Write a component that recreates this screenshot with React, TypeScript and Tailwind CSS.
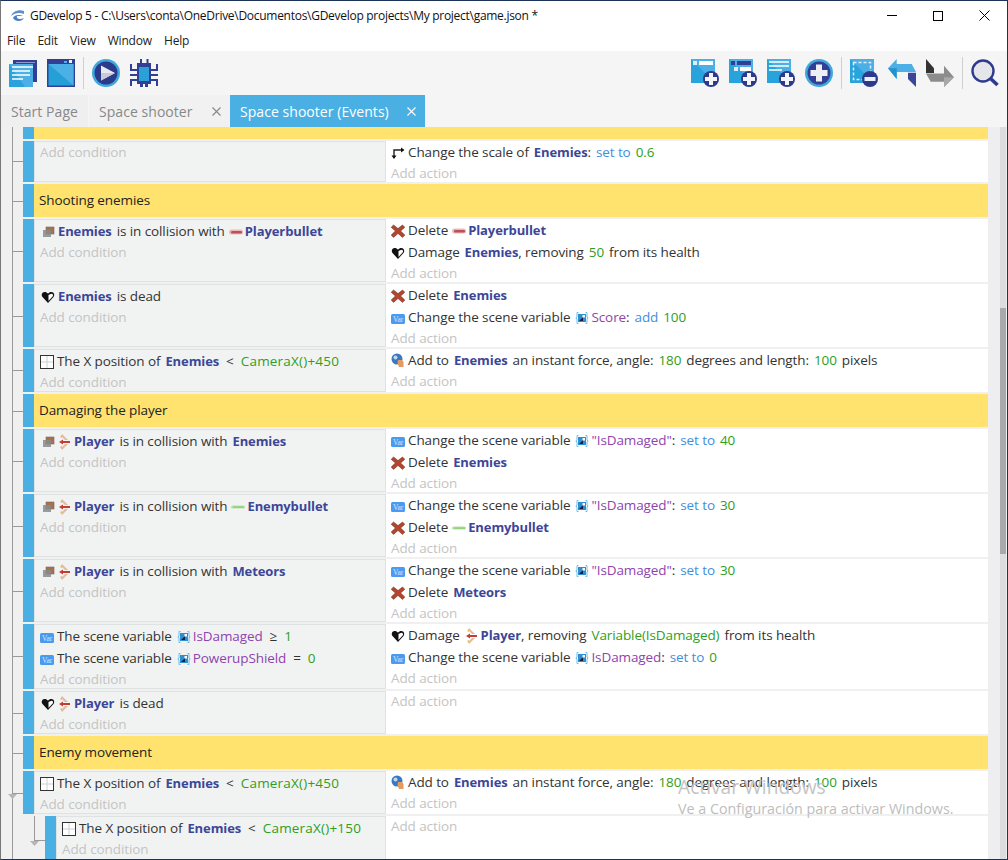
import type { ReactNode } from "react"

const font = "font-['Open_Sans','Noto_Sans',sans-serif]"

// --- inline text helpers ---
const Obj = ({ children }: { children: ReactNode }) => <span className="text-[13px] font-bold text-[#3c4698]">{children}</span>
const Op = ({ children }: { children: ReactNode }) => <span className="text-[#3f8ee0]">{children}</span>
const Num = ({ children }: { children: ReactNode }) => <span className="text-[#2f9e1c]">{children}</span>
const Expr = ({ children }: { children: ReactNode }) => <span className="tracking-[0.2px] text-[#2f9e1c]">{children}</span>
const Vr = ({ children }: { children: ReactNode }) => <span className="text-[#8e44ad]">{children}</span>
const G = () => <span className="inline-block w-[5px]" />
const GG = () => <span className="inline-block w-[7px]" />

const ic = "mr-[3px] inline-block align-[-3px]"

// --- small instruction icons ---
function CollisionIcon() {
  return (
    <svg width="14" height="14" viewBox="0 0 14 14" className={`${ic} ml-[1px]`}>
      <rect x="5" y="2" width="8" height="7" fill="#a5714f" stroke="#7d6a5e" strokeWidth="0.6" />
      <rect x="2" y="5" width="8" height="7" fill="#8a8a8a" opacity="0.85" />
    </svg>
  )
}

function HeartIcon() {
  return (
    <svg width="14" height="14" viewBox="0 0 14 14" className={ic}>
      <path d="M7 13 L1.5 7 C0 5 1 2 3.6 2 C5 2 6.2 2.6 7 3.8 C7.8 2.6 9 2 10.4 2 C13 2 14 5 12.5 7 Z" fill="#111" />
      <path d="M7.5 5 L10.3 3.8 C12 3.8 12.6 5.4 11.6 6.6 L7.5 11 Z" fill="#fff" />
    </svg>
  )
}

function DeleteIcon() {
  return (
    <svg width="14" height="14" viewBox="0 0 14 14" className={ic}>
      <path d="M2.5 1 L7 4.6 L11.5 1 L13.8 3.3 L9.6 7 L13.8 11 L11.5 13.4 L7 9.4 L2.5 13.4 L0.2 11 L4.4 7 L0.2 3.3 Z" fill="#b5452c" stroke="#6e3a2c" strokeWidth="0.6" />
    </svg>
  )
}

function VarIcon() {
  return (
    <svg width="14" height="12" viewBox="0 0 14 12" className={`${ic} align-[-2px]`}>
      <rect x="0" y="1" width="14" height="10" rx="1.5" fill="#4a9af0" />
      <text x="7" y="8.6" textAnchor="middle" fontSize="7.5" fill="#d6e8fb" fontFamily="'Liberation Serif', serif">Var</text>
    </svg>
  )
}

function ScopeIcon() {
  return (
    <svg width="14" height="14" viewBox="0 0 14 14" className="mr-[2px] inline-block align-[-3px]">
      <path d="M3.5 1.5 H2 V6 L0.8 7 L2 8 V12.5 H3.5 M10.5 1.5 H12 V6 L13.2 7 L12 8 V12.5 H10.5" fill="none" stroke="#6dbcec" strokeWidth="1" />
      <rect x="3" y="3" width="8" height="8" fill="#2d8fd0" />
      <path d="M4 10 L8 6 V10 Z" fill="#14233f" />
      <rect x="7.5" y="4" width="2.5" height="2.5" fill="#fff" />
    </svg>
  )
}

function PositionIcon() {
  return (
    <svg width="14" height="14" viewBox="0 0 14 14" className={ic}>
      <rect x="0.5" y="0.5" width="13" height="13" fill="#fff" stroke="#333" />
      <path d="M7 1 V13 M1 7 H13" stroke="#cfcfcf" strokeWidth="1" />
    </svg>
  )
}

function ScaleIcon() {
  return (
    <svg width="14" height="14" viewBox="0 0 14 14" className={ic}>
      <path d="M3 12 V4 H10" fill="none" stroke="#222" strokeWidth="1.4" />
      <path d="M0.5 9.5 H5.5 L3 13 Z M10 1.5 L13.5 4 L10 6.5 Z" fill="#111" />
    </svg>
  )
}

function ForceIcon() {
  return (
    <svg width="14" height="15" viewBox="0 0 14 15" className={ic}>
      <circle cx="6" cy="6" r="5.5" fill="#3a78c0" />
      <circle cx="4.5" cy="4.5" r="2" fill="#bcd9f2" />
      <path d="M7 7 H11 L12.5 9 V14 H8 L6.5 10 Z" fill="#e59a62" />
    </svg>
  )
}

function BulletRed() {
  return (
    <svg width="14" height="6" viewBox="0 0 14 6" className="ml-[4px] mr-[2px] inline-block align-[1px]">
      <rect x="0" y="0.5" width="14" height="5" rx="2.5" fill="#e8b9b9" />
      <rect x="2" y="2" width="11" height="2.4" rx="1.2" fill="#bd4f55" />
    </svg>
  )
}

function BulletGreen() {
  return (
    <svg width="14" height="4" viewBox="0 0 14 4" className="ml-[4px] mr-[2px] inline-block align-[2px]">
      <rect x="0" y="0.5" width="14" height="3" rx="1.5" fill="#b7e3a8" />
      <rect x="2" y="1.5" width="11" height="1.2" fill="#85c96f" />
    </svg>
  )
}

function ShipIcon() {
  return (
    <svg width="11" height="16" viewBox="0 0 11 16" className="ml-[1px] mr-[4px] inline-block align-[-4px]">
      <path d="M3 0 L9 6 L6 6 L2 2 Z" fill="#e3b9a0" />
      <path d="M3 16 L9 10 L6 10 L2 14 Z" fill="#e3b9a0" />
      <path d="M1 3 L3 1 L3 4 Z M1 13 L3 15 L3 12 Z" fill="#e2c24a" />
      <path d="M0 8 L4 5.5 L4 7 L11 7 V9 L4 9 L4 10.5 Z" fill="#c23c34" />
    </svg>
  )
}

// --- toolbar icons ---
function DocsIcon() {
  return (
    <svg width="28" height="28" viewBox="0 0 28 28">
      <rect x="4" y="1" width="24" height="22" fill="#333f94" />
      <path d="M7 3 H26 V4 H7 Z" fill="#8f97cc" />
      <rect x="0" y="5" width="24" height="23" fill="#29a3dc" />
      <path d="M0 5 H24 V28 H16 Z" fill="#4cb0e6" />
      <path d="M3 8 H24 M3 12 H21 M3 16 H21 M3 20 H14" stroke="#fff" strokeWidth="1.6" />
    </svg>
  )
}

function SceneIcon() {
  return (
    <svg width="28" height="28" viewBox="0 0 28 28">
      <rect width="28" height="28" fill="#333f94" />
      <rect x="1.5" y="5" width="25" height="21.5" fill="#25a0d6" />
      <path d="M1.5 5 H26.5 V26.5 Z" fill="#4cb0e6" />
      <rect x="17" y="2" width="3" height="2" fill="#4cb0e6" />
      <rect x="22" y="1" width="3" height="3" fill="#e6f2fb" />
    </svg>
  )
}

function PlayIcon() {
  return (
    <svg width="28" height="28" viewBox="0 0 28 28">
      <circle cx="14" cy="14" r="14" fill="#3fa9dd" />
      <circle cx="14" cy="14" r="11.5" fill="#2c3a8c" />
      <path d="M9 6.5 L23 14 L9 21.5 Z" fill="#e9eaf0" />
      <path d="M9 14 H23 L9 21.5 Z" fill="#c8cad6" />
    </svg>
  )
}

function BugIcon() {
  return (
    <svg width="28" height="28" viewBox="0 0 28 28">
      <path d="M11 0 V5 M17.5 0 V5 M1 5 V11 H7 M27 5 V11 H21 M0 16 H7 M28 16 H21 M1 27 V21 H7 M27 27 V21 H21" fill="none" stroke="#333f94" strokeWidth="2" />
      <rect x="7" y="4" width="14" height="21" fill="#333f94" />
      <rect x="9" y="8" width="10" height="14" fill="#2aa0d8" />
      <rect x="10" y="25" width="3" height="3" fill="#333f94" />
      <rect x="15" y="25" width="3" height="3" fill="#333f94" />
    </svg>
  )
}

function PlusBadge({ minus }: { minus?: boolean }) {
  return (
    <g>
      <circle cx="20" cy="20" r="8" fill="#2c3a8c" />
      {minus ? <rect x="14.5" y="18" width="11" height="4" fill="#eef" /> : <path d="M18 14 H22 V18 H26 V22 H22 V26 H18 V22 H14 V18 H18 Z" fill="#f3f3f8" />}
    </g>
  )
}

function AddSceneIcon({ kind }: { kind: "a" | "b" | "c" }) {
  return (
    <svg width="28" height="28" viewBox="0 0 28 28">
      <rect x="0" y="0" width="24" height="24" fill="#29a3dc" />
      <path d="M0 0 H24 V24 Z" fill="#4cb0e6" />
      {kind === "a" && (
        <>
          <rect x="2" y="2" width="4" height="4" fill="#dfeefa" />
          <rect x="8" y="2" width="14" height="4" fill="#fff" />
        </>
      )}
      {kind === "b" && (
        <>
          <rect x="2" y="2" width="4" height="4" fill="#333f94" />
          <rect x="8" y="2" width="14" height="4" fill="#333f94" />
          <rect x="5" y="8" width="4" height="4" fill="#dfeefa" />
          <rect x="11" y="8" width="11" height="4" fill="#fff" />
        </>
      )}
      {kind === "c" && <path d="M2 3 H22 M2 7 H22 M2 11 H15" stroke="#fff" strokeWidth="1.6" />}
      <PlusBadge />
    </svg>
  )
}

function BigPlusIcon() {
  return (
    <svg width="28" height="28" viewBox="0 0 28 28">
      <circle cx="14" cy="14" r="14" fill="#3fa9dd" />
      <circle cx="14" cy="14" r="11.5" fill="#333f94" />
      <path d="M11 5.5 H17 V11 H22.5 V17 H17 V22.5 H11 V17 H5.5 V11 H11 Z" fill="#eeeef5" />
    </svg>
  )
}

function RemoveIcon() {
  return (
    <svg width="28" height="28" viewBox="0 0 28 28">
      <rect x="0" y="0" width="24" height="24" fill="#29a3dc" />
      <path d="M0 0 H24 V24 Z" fill="#4cb0e6" />
      <rect x="3.5" y="3.5" width="17" height="17" fill="none" stroke="#dfeefa" strokeWidth="1.5" strokeDasharray="3 2" />
      <PlusBadge minus />
    </svg>
  )
}

function UndoIcon() {
  return (
    <svg width="28" height="28" viewBox="0 0 28 28">
      <path d="M8.7 0 V5 H23.7 L28 13 H8.7 V20 L0 9.3 Z" fill="#4cb0e6" />
      <path d="M8.7 9.3 V20 L0 9.3 Z" fill="#2293cb" />
      <path d="M20 13.7 H28 V28 L20 20 Z" fill="#3c4698" />
    </svg>
  )
}

function RedoIcon() {
  return (
    <svg width="28" height="28" viewBox="0 0 28 28">
      <path d="M0 0 L8 9.3 V14 H0 Z" fill="#333" />
      <path d="M0 14.5 H18 V6.7 L28 18.3 L18 28 V22.7 H4.7 Z" fill="#8c8c8c" />
      <path d="M18 18.3 H28 L18 28 Z" fill="#a8a8a8" />
    </svg>
  )
}

function SearchIcon() {
  return (
    <svg width="28" height="28" viewBox="0 0 28 28">
      <circle cx="12" cy="12" r="10.5" fill="#e4e6ea" stroke="#2f3a8f" strokeWidth="2.4" />
      <path d="M19.5 19.5 L26.5 26" stroke="#2f3a8f" strokeWidth="3.6" />
    </svg>
  )
}

function ToolbarSep() {
  return <div className="mx-[8px] h-[32px] w-px bg-[#cfcfcf]" />
}

function TabClose({ color }: { color: string }) {
  return (
    <svg width="9" height="9" viewBox="0 0 9 9">
      <path d="M0.5 0.5 L8.5 8.5 M8.5 0.5 L0.5 8.5" stroke={color} strokeWidth="1.1" />
    </svg>
  )
}

// --- event sheet parts ---
function Line({ children }: { children: ReactNode }) {
  return <div className="h-[22px] whitespace-pre text-[13.5px] leading-[22px] tracking-[-0.1px] text-[#333]">{children}</div>
}

function AddText({ children }: { children: ReactNode }) {
  return <div className="h-[20px] text-[13.5px] leading-[20px] tracking-[-0.1px] text-[#c4c4c4]">{children}</div>
}

function Row({ h, conditions, actions, indent }: { h: string; conditions?: ReactNode; actions?: ReactNode; indent?: boolean }) {
  return (
    <div className={`flex shrink-0 ${h} ${indent ? "pl-[22px]" : ""}`}>
      <div className="w-[11px] shrink-0 bg-[#4ab0e4]" />
      <div className="flex min-w-0 flex-1">
        <div className="min-w-0 flex-1 border border-[#dfe2e2] bg-[#f1f3f3] pl-[5px]">
          {conditions}
          <AddText>Add condition</AddText>
        </div>
        <div className="w-[602px] shrink-0 bg-white pl-[5px]">
          {actions}
          <AddText>Add action</AddText>
        </div>
      </div>
    </div>
  )
}

function Group({ title, h = "h-[33px]" }: { title?: string; h?: string }) {
  return (
    <div className={`flex shrink-0 ${h}`}>
      <div className="w-[11px] shrink-0 bg-[#4ab0e4]" />
      <div className="flex flex-1 items-center bg-[#ffe36e] pl-[5px] text-[13.5px] tracking-[-0.1px] text-[#222]">{title}</div>
    </div>
  )
}

function Gutter() {
  const ticks = [34, 74, 124, 189, 243, 284, 334, 399, 464, 529, 586, 626, 666]
  return (
    <div className="relative w-[22px] shrink-0">
      <div className="absolute bottom-0 left-[11px] top-0 w-px bg-[#9a9a9a]" />
      {ticks.map((t) => (
        <div key={t} className="absolute left-[11px] h-px w-[11px] bg-[#9a9a9a]" style={{ top: t }} />
      ))}
      <svg width="9" height="5" viewBox="0 0 9 5" className="absolute left-[7px] top-[667px]">
        <path d="M0 0 H9 L4.5 5 Z" fill="#b5b5b5" />
      </svg>
      <div className="absolute left-[33px] top-[689px] h-[24px] w-px bg-[#9a9a9a]" />
      <div className="absolute left-[33px] top-[713px] h-px w-[11px] bg-[#9a9a9a]" />
      <svg width="9" height="5" viewBox="0 0 9 5" className="absolute left-[29px] top-[714px]">
        <path d="M0 0 H9 L4.5 5 Z" fill="#b5b5b5" />
      </svg>
    </div>
  )
}

export default function App() {
  return (
    <div className={`flex h-[860px] w-[1008px] flex-col overflow-hidden border-b border-l border-r border-t border-b-[#1c3358] border-l-[#777777] border-r-[#1c3358] border-t-[#1c3358] bg-white ${font}`}>
      {/* title bar */}
      <div className="flex h-[29px] shrink-0 items-center bg-white pl-[9px] text-[12px] text-[#111]">
        <svg width="16" height="14" viewBox="0 0 16 14">
          <path d="M14 2 C9 0 3 2 1 7 C5 4 9 3 14 5 Z" fill="#5a8fd0" />
          <path d="M13 7 H7 C6 10 10 11 14 9 C12 13 5 13 3 9 C4 6 9 5 13 7 Z" fill="#4a7fc5" />
        </svg>
        <span className="ml-[4px] tracking-[-0.28px]">GDevelop 5 - C:\Users\conta\OneDrive\Documentos\GDevelop projects\My project\game.json *</span>
        <div className="ml-auto flex items-center">
          <div className="flex h-[29px] w-[46px] items-center justify-center">
            <div className="h-px w-[10px] bg-black" />
          </div>
          <div className="flex h-[29px] w-[46px] items-center justify-center">
            <div className="h-[10px] w-[10px] border border-black" />
          </div>
          <div className="flex h-[29px] w-[46px] items-center justify-center">
            <svg width="11" height="11" viewBox="0 0 11 11">
              <path d="M0.5 0.5 L10.5 10.5 M10.5 0.5 L0.5 10.5" stroke="#000" strokeWidth="1" />
            </svg>
          </div>
        </div>
      </div>

      {/* menu */}
      <div className="flex h-[21px] shrink-0 items-center gap-[12.2px] bg-white pl-[6px] text-[12px] tracking-[-0.2px] text-[#222]">
        <span>File</span>
        <span>Edit</span>
        <span>View</span>
        <span>Window</span>
        <span>Help</span>
      </div>

      {/* toolbar */}
      <div className="flex h-[44px] shrink-0 items-center bg-[#f5f5f5] pl-[8px] pr-[8px]">
        <div className="flex gap-[10px]">
          <DocsIcon />
          <SceneIcon />
        </div>
        <ToolbarSep />
        <div className="flex gap-[10px]">
          <PlayIcon />
          <BugIcon />
        </div>
        <div className="ml-auto flex items-center">
          <div className="flex gap-[10px]">
            <AddSceneIcon kind="a" />
            <AddSceneIcon kind="b" />
            <AddSceneIcon kind="c" />
            <BigPlusIcon />
          </div>
          <ToolbarSep />
          <div className="flex gap-[10px]">
            <RemoveIcon />
            <UndoIcon />
            <RedoIcon />
          </div>
          <ToolbarSep />
          <SearchIcon />
        </div>
      </div>

      {/* tabs */}
      <div className="flex h-[32px] shrink-0 bg-[#f5f5f5] text-[14px] tracking-[0.05px]">
        <div className="flex w-[87px] items-center bg-[#efefef] pl-[10px] text-[#888]">Start Page</div>
        <div className="ml-px flex w-[141px] items-center justify-between bg-[#f1f1f1] pl-[10px] pr-[9px] text-[#888]">
          <span>Space shooter</span>
          <TabClose color="#888" />
        </div>
        <div className="flex w-[195px] items-center justify-between bg-[#4ab0e4] pl-[10px] pr-[9px] text-white">
          <span>Space shooter (Events)</span>
          <TabClose color="#fff" />
        </div>
      </div>

      {/* events sheet */}
      <div className="relative flex min-h-0 flex-1 bg-[#f0f0f0]">
        <Gutter />
        <div className="flex w-[965px] shrink-0 flex-col gap-[2px] overflow-hidden">
          <Group h="h-[12px]" />
          <Row
            h="h-[41px]"
            actions={<Line><ScaleIcon />Change the scale of<G /><Obj>Enemies</Obj>:<G /><Op>set to</Op><G /><Num>0.6</Num></Line>}
          />
          <Group title="Shooting enemies" />
          <Row
            h="h-[63px]"
            conditions={<Line><CollisionIcon /><Obj>Enemies</Obj><G />is in collision with<BulletRed /><Obj>Playerbullet</Obj></Line>}
            actions={
              <>
                <Line><DeleteIcon />Delete<BulletRed /><Obj>Playerbullet</Obj></Line>
                <Line><HeartIcon />Damage<G /><Obj>Enemies</Obj>, removing<G /><Num>50</Num><G />from its health</Line>
              </>
            }
          />
          <Row
            h="h-[63px]"
            conditions={<Line><span className="ml-[1px]" /><HeartIcon /><Obj>Enemies</Obj><G />is dead</Line>}
            actions={
              <>
                <Line><DeleteIcon />Delete<G /><Obj>Enemies</Obj></Line>
                <Line><VarIcon />Change the scene variable<G /><ScopeIcon /><Vr>Score</Vr>:<G /><Op>add</Op><G /><Num>100</Num></Line>
              </>
            }
          />
          <Row
            h="h-[43px]"
            conditions={<Line><PositionIcon />The X position of<G /><Obj>Enemies</Obj><GG />&lt;<GG /><Expr>CameraX()+450</Expr></Line>}
            actions={<Line><ForceIcon />Add to<G /><Obj>Enemies</Obj><G />an instant force, angle:<G /><Num>180</Num><G />degrees and length:<G /><Num>100</Num><G />pixels</Line>}
          />
          <Group title="Damaging the player" />
          <Row
            h="h-[63px]"
            conditions={<Line><CollisionIcon /><ShipIcon /><Obj>Player</Obj><G />is in collision with<G /><Obj>Enemies</Obj></Line>}
            actions={
              <>
                <Line><VarIcon />Change the scene variable<G /><ScopeIcon /><Vr>"IsDamaged"</Vr>:<G /><Op>set to</Op><G /><Num>40</Num></Line>
                <Line><DeleteIcon />Delete<G /><Obj>Enemies</Obj></Line>
              </>
            }
          />
          <Row
            h="h-[63px]"
            conditions={<Line><CollisionIcon /><ShipIcon /><Obj>Player</Obj><G />is in collision with<BulletGreen /><Obj>Enemybullet</Obj></Line>}
            actions={
              <>
                <Line><VarIcon />Change the scene variable<G /><ScopeIcon /><Vr>"IsDamaged"</Vr>:<G /><Op>set to</Op><G /><Num>30</Num></Line>
                <Line><DeleteIcon />Delete<BulletGreen /><Obj>Enemybullet</Obj></Line>
              </>
            }
          />
          <Row
            h="h-[63px]"
            conditions={<Line><CollisionIcon /><ShipIcon /><Obj>Player</Obj><G />is in collision with<G /><Obj>Meteors</Obj></Line>}
            actions={
              <>
                <Line><VarIcon />Change the scene variable<G /><ScopeIcon /><Vr>"IsDamaged"</Vr>:<G /><Op>set to</Op><G /><Num>30</Num></Line>
                <Line><DeleteIcon />Delete<G /><Obj>Meteors</Obj></Line>
              </>
            }
          />
          <Row
            h="h-[65px]"
            conditions={
              <>
                <Line><VarIcon />The scene variable<G /><ScopeIcon /><Vr>IsDamaged</Vr><GG />≥<GG /><Num>1</Num></Line>
                <Line><VarIcon />The scene variable<G /><ScopeIcon /><Vr>PowerupShield</Vr><GG />=<GG /><Num>0</Num></Line>
              </>
            }
            actions={
              <>
                <Line><HeartIcon />Damage<G /><ShipIcon /><Obj>Player</Obj>, removing<G /><Num>Variable(IsDamaged)</Num><G />from its health</Line>
                <Line><VarIcon />Change the scene variable<G /><ScopeIcon /><Vr>IsDamaged</Vr>:<G /><Op>set to</Op><G /><Num>0</Num></Line>
              </>
            }
          />
          <Row h="h-[43px]" conditions={<Line><span className="ml-[1px]" /><HeartIcon /><ShipIcon /><Obj>Player</Obj><G />is dead</Line>} />
          <Group title="Enemy movement" />
          <Row
            h="h-[43px]"
            conditions={<Line><PositionIcon />The X position of<G /><Obj>Enemies</Obj><GG />&lt;<GG /><Expr>CameraX()+450</Expr></Line>}
            actions={<Line><ForceIcon />Add to<G /><Obj>Enemies</Obj><G />an instant force, angle:<G /><Num>180</Num><G />degrees and length:<G /><Num>100</Num><G />pixels</Line>}
          />
          <Row
            h="h-[44px]"
            indent
            conditions={<Line><PositionIcon />The X position of<G /><Obj>Enemies</Obj><GG />&lt;<GG /><Expr>CameraX()+150</Expr></Line>}
          />
        </div>
        {/* scrollbar */}
        <div className="flex flex-1 justify-end bg-[#eeeef0] pr-px">
          <div className="relative h-full w-[6px] bg-[#dcdce0]">
            <div className="absolute left-0 top-[181px] h-[246px] w-full bg-[#a9a9a9]" />
          </div>
        </div>
        {/* activation watermark */}
        <div className="pointer-events-none absolute left-[677px] top-[648px] text-[#c4c4c4]">
          <div className="text-[19.2px] leading-[24px]">Activar Windows</div>
          <div className="text-[14.3px] leading-[20px] text-[#bdbdbd]">Ve a Configuración para activar Windows.</div>
        </div>
      </div>
    </div>
  )
}
